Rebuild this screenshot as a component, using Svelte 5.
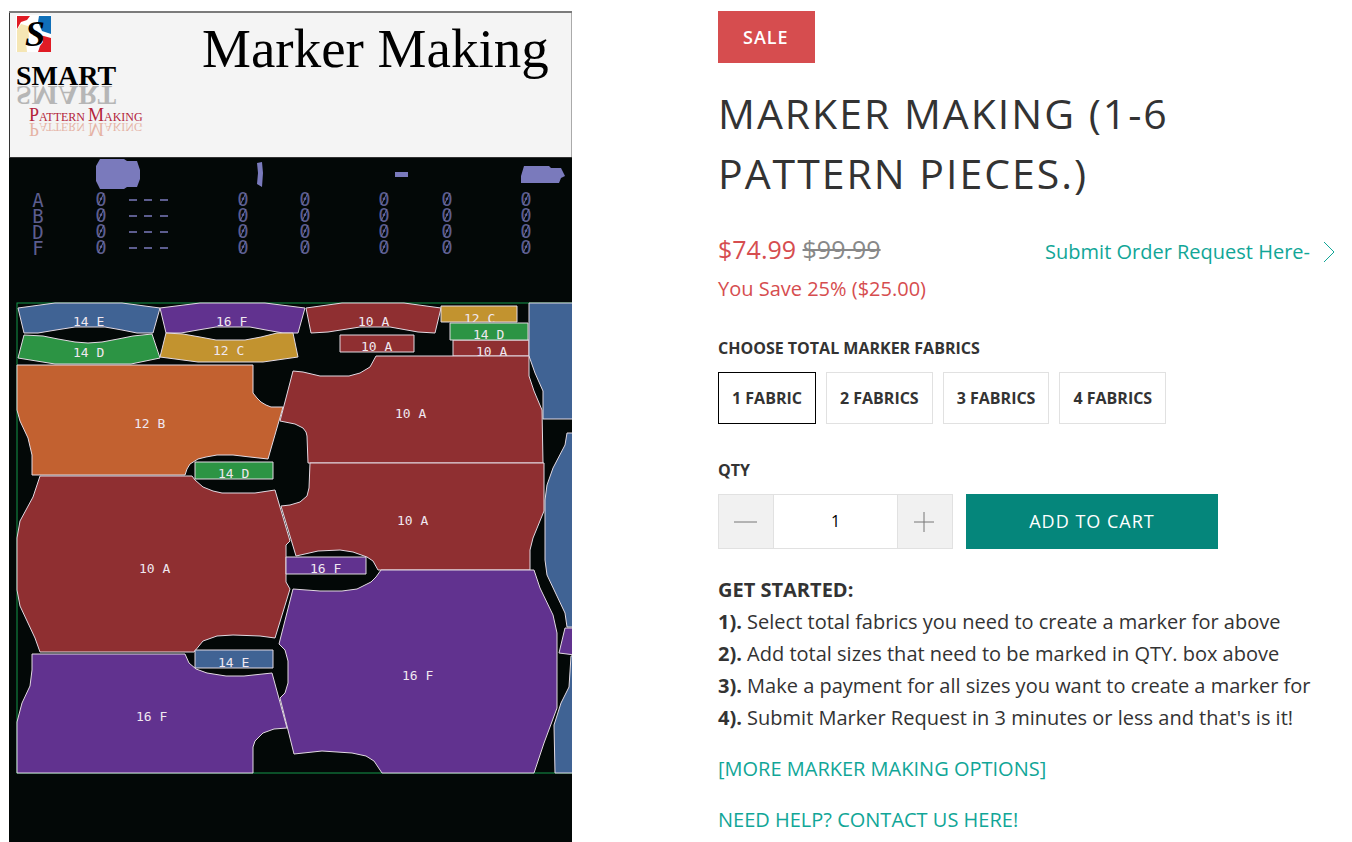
<script>
  const colors = {
    blue: '#406394',
    purple: '#61328f',
    red: '#8f2f31',
    green: '#2c9444',
    gold: '#c2932f',
    orange: '#c26130'
  };

  // Marker pieces: outline points, label and label baseline
  const pieces = [
    { color: 'blue', label: '14 E', x: 73, y: 326, points: '18,308 55,303 122,303 160,308 153,333 137,333 122,330 105,327 75,327 56,330 38,333 24,333' },
    { color: 'green', label: '14 D', x: 73, y: 357, points: '24,335 43,336 58,339 75,342 88,343 102,342 118,339 133,336 152,334 160,358 131,364 55,364 18,358' },
    { color: 'purple', label: '16 F', x: 216, y: 326, points: '160,308 200,303 265,303 305,308 298,333 283,333 266,330 250,327 216,327 198,330 181,333 166,333' },
    { color: 'gold', label: '12 C', x: 213, y: 355, points: '166,333 183,334 200,337 216,340 245,340 261,337 277,333 293,333 298,357 263,362 198,362 160,357' },
    { color: 'red', label: '10 A', x: 358, y: 326, points: '306,308 342,303 404,303 441,308 435,333 418,332 390,327 360,327 328,332 311,333' },
    { color: 'gold', label: '12 C', x: 464, y: 323, points: '441,306 517,306 517,322 441,322' },
    { color: 'red', label: '10 A', x: 476, y: 356, points: '453,340 529,340 529,356 453,356' },
    { color: 'green', label: '14 D', x: 473, y: 339, points: '450,323 528,323 528,340 450,340' },
    { color: 'red', label: '10 A', x: 361, y: 351, points: '340,335 414,335 414,352 340,352' },
    { color: 'blue', label: '', x: 0, y: 0, points: '529,303 575,303 575,419 543,419 543,391 535,373 529,356' },
    { color: 'blue', label: '', x: 0, y: 0, points: '575,433 567,433 565,445 553,468 547,485 545,500 545,560 547,575 565,613 567,627 575,627' },
    { color: 'purple', label: '', x: 0, y: 0, points: '575,628 565,628 559,653 575,655' },
    { color: 'blue', label: '', x: 0, y: 0, points: '575,655 571,656 569,687 561,703 554,725 555,773 575,773' },
    { color: 'orange', label: '12 B', x: 134, y: 428, points: '17,365 253,365 253,393 257,398 261,402 266,405 271,407 283,407 268,459 250,457 233,455 217,455 206,457 198,459 190,464 187,469 185,475 32,475 32,455 28,438 20,421 17,410' },
    { color: 'red', label: '10 A', x: 395, y: 418, points: '293,371 303,372 320,376 349,376 360,373 370,367 376,356 529,356 529,376 534,391 542,410 543,463 308,463 307,436 306,432 303,428 295,424 280,421' },
    { color: 'red', label: '10 A', x: 397, y: 525, points: '310,463 544,463 544,511 533,538 530,550 530,570 378,570 373,561 367,557 353,552 340,550 318,551 296,556 281,506 290,505 300,502 307,496 309,488' },
    { color: 'red', label: '10 A', x: 139, y: 573, points: '40,476 192,476 195,480 203,487 213,491 222,493 255,493 275,490 290,541 286,545 286,582 290,589 275,638 260,636 233,635 217,636 203,641 194,652 40,652 35,638 20,606 17,590 17,538 20,521 33,497' },
    { color: 'purple', label: '16 F', x: 402, y: 680, points: '293,589 320,591 342,591 357,589 371,582 376,577 381,570 534,570 540,588 553,615 557,633 557,708 544,743 534,773 382,773 374,761 366,756 352,753 322,751 294,754 280,698 285,693 288,683 288,661 285,650 279,644' },
    { color: 'purple', label: '16 F', x: 136, y: 721, points: '32,654 185,654 189,663 196,669 207,673 226,676 244,676 272,673 287,728 274,729 263,733 255,741 253,747 253,773 17,773 17,722 22,703 30,686 32,670' },
    { color: 'green', label: '14 D', x: 218, y: 478, points: '195,462 273,462 273,479 195,479' },
    { color: 'purple', label: '16 F', x: 310, y: 573, points: '286,557 366,557 366,574 286,574' },
    { color: 'blue', label: '14 E', x: 218, y: 667, points: '195,650 273,650 273,668 195,668' }
  ];

  const sizeRows = ['A', 'B', 'D', 'F'];
  const countColumns = [101, 243, 305, 384, 447, 526];

  const fabrics = ['1 Fabric', '2 Fabrics', '3 Fabrics', '4 Fabrics'];

  const steps = [
    'Select total fabrics you need to create a marker for above',
    'Add total sizes that need to be marked in QTY. box above',
    'Make a payment for all sizes you want to create a marker for',
    "Submit Marker Request in 3 minutes or less and that's is it!"
  ];

  let fabric = $state('1 Fabric');
  let qty = $state(1);
</script>

<main class="product">
  <div class="gallery">
    <svg viewBox="9 11 563 831" role="img" aria-label="Marker Making">
      <defs>
        {#each pieces as piece, i}
          <clipPath id="piece-{i}"><polygon points={piece.points} /></clipPath>
        {/each}
      </defs>
      <rect x="9" y="11" width="563" height="831" fill="#030807" />

      <!-- Banner -->
      <rect x="9" y="11" width="563" height="147" fill="#333" />
      <rect x="10" y="11" width="562" height="146" fill="#aaa" />
      <rect x="10" y="13" width="561" height="144" fill="#f4f4f4" />
      <path d="M9 12H572" stroke="#7b7b7b" stroke-width="2" />
      <rect x="16" y="15" width="35" height="37" fill="#fff" />
      <path d="M17 16H30L27 20L21 22L17 29Z" fill="#e01b24" />
      <path d="M39 16H51V34L42 31L38 22Z" fill="#0f6fb8" />
      <path d="M17 30L21 24L28 26L29 37L26 42L27 52H17Z" fill="#f5e6b4" />
      <path d="M40 35L51 38V52H38L40 46L43 42Z" fill="#e01b24" />
      <text class="logo-letter" x="25" y="46">S</text>
      <text class="logo-name" x="16" y="85">SMART</text>
      <text class="logo-name mirrored" x="16" y="-86" transform="scale(1 -1)" aria-hidden="true">SMART</text>
      <text class="logo-sub" x="29" y="121"><tspan class="cap">P</tspan>ATTERN <tspan class="cap">M</tspan>AKING</text>
      <text class="logo-sub mirrored" x="29" y="-123" transform="scale(1 -1)" aria-hidden="true"><tspan class="cap">P</tspan>ATTERN <tspan class="cap">M</tspan>AKING</text>
      <text class="banner-title" x="202" y="67">Marker Making</text>

      <!-- Piece icons and counts -->
      <g fill="#7a7abc">
        <path d="M100 159H124L127 161H137L140 170V179L137 187H127L124 189H100L96 181V166Z" />
        <path d="M257 163L262 162L263 173L262 187L257 184L258 173Z" />
        <path d="M395 172H408V177H395Z" />
        <path d="M524 166H549L551 168H561L565 176L561 178L559 183H521V176Z" />
      </g>
      {#each sizeRows as row, i}
        <g class="counts">
          <text x="38" y={207 + i * 16}>{row}</text>
          {#each countColumns as cx}
            <text x={cx} y={206 + i * 16}>0</text>
            <path class="slash" d="M{cx - 3} {205 + i * 16}l6 -12" />
          {/each}
          <path d="M129 {200 + i * 16}h8m7 0h8m8 0h8" />
        </g>
      {/each}

      <!-- Marker layout -->
      <rect x="17" y="303" width="570" height="470" fill="none" stroke="#14964a" />
      {#each pieces as piece, i}
        <polygon class="piece" points={piece.points} fill={colors[piece.color]} />
        {#if piece.label}
          <g clip-path="url(#piece-{i})">
            <text class="piece-label" x={piece.x} y={piece.y}>{piece.label}</text>
          </g>
        {/if}
      {/each}
    </svg>
  </div>

  <div class="details">
    <span class="sale">Sale</span>
    <h1>Marker Making (1-6 Pattern Pieces.)</h1>

    <div class="price-row">
      <p class="price">$74.99 <s>$99.99</s></p>
      <a class="order-link" href="#order">
        Submit Order Request Here-
        <svg width="12" height="22" viewBox="0 0 12 22" fill="none" stroke="currentColor" aria-hidden="true"><path d="M1 1L11 11L1 21" /></svg>
      </a>
    </div>
    <p class="savings">You Save 25% ($25.00)</p>

    <fieldset>
      <legend>Choose total marker fabrics</legend>
      <div class="options">
        {#each fabrics as option}
          <label class="option" class:selected={fabric === option}>
            <input type="radio" name="fabric" value={option} bind:group={fabric} />
            {option}
          </label>
        {/each}
      </div>
    </fieldset>

    <label class="qty-label" for="qty">Qty</label>
    <div class="purchase">
      <div class="qty">
        <button type="button" aria-label="Decrease quantity" onclick={() => (qty = Math.max(1, Number(qty) - 1))}>
          <svg width="24" height="24" viewBox="0 0 24 24" aria-hidden="true"><path d="M0 12H23" /></svg>
        </button>
        <input id="qty" type="text" inputmode="numeric" bind:value={qty} />
        <button type="button" aria-label="Increase quantity" onclick={() => (qty = Number(qty) + 1)}>
          <svg width="24" height="24" viewBox="0 0 24 24" aria-hidden="true"><path d="M1 12H21M11 2V22" /></svg>
        </button>
      </div>
      <button type="button" class="add">Add to Cart</button>
    </div>

    <div class="description">
      <p>
        <strong>GET STARTED:</strong>
        {#each steps as step, i}
          <br /><strong>{i + 1}).</strong> {step}
        {/each}
      </p>
      <p><a href="#options">[MORE MARKER MAKING OPTIONS]</a></p>
      <p><a href="#contact">NEED HELP? CONTACT US HERE!</a></p>
    </div>
  </div>
</main>

<style>
  :global(body) { margin: 0; background: #fff; }

  .product {
    display: grid; grid-template-columns: 563fr 617fr; column-gap: 146px;
    padding: 11px 17px 0 9px;
    font-family: "Open Sans", sans-serif; font-size: 20px; line-height: 32px; color: #333;
  }
  .gallery svg { display: block; width: 100%; height: auto; }

  .banner-title { font: 55px "Liberation Serif", serif; }
  .logo-letter { font: italic bold 36px "Liberation Serif", serif; }
  .logo-name { font: bold 28px "Liberation Serif", serif; }
  .logo-sub { font: 12px "Liberation Serif", serif; fill: #b3243a; }
  .logo-sub .cap { font-size: 18px; }
  .mirrored { opacity: 0.25; }
  .logo-sub.mirrored { fill: #d0532f; opacity: 0.4; }
  .counts { fill: #7a7abc; stroke: none; opacity: 0.75; }
  .counts text { font: 19px "DejaVu Sans Mono", monospace; text-anchor: middle; }
  .counts path { stroke: #7a7abc; stroke-width: 2; }
  .counts .slash { stroke: #9090e0; stroke-width: 1; }
  .piece { stroke: #e2d9e2; }
  .piece-label { font: 13px "DejaVu Sans Mono", monospace; fill: #f0e8f0; }

  .sale {
    display: inline-block; padding: 10px 26px 10px 25px;
    background: #d64d4f; color: #fff;
    font-size: 18px; font-weight: 600; letter-spacing: 1px; text-transform: uppercase;
  }
  h1 {
    margin: 20px 0 30px;
    font-size: 41px; font-weight: 400; line-height: 60px; letter-spacing: 2px; text-transform: uppercase;
  }
  p { margin: 0; }

  .price-row { display: flex; justify-content: space-between; align-items: baseline; }
  .price { font-size: 25px; color: #d64d4f; }
  .price s { color: #888; }
  .order-link { display: flex; align-items: center; gap: 13px; }
  .savings { margin-top: 5px; color: #d64d4f; }
  a { color: #11a697; text-decoration: none; }

  fieldset { margin: 27px 0 0; padding: 0; border: 0; min-width: 0; }
  legend, .qty-label {
    display: block; padding: 0;
    font-size: 16px; font-weight: 700; text-transform: uppercase;
  }
  .options { display: flex; flex-wrap: wrap; gap: 10px; margin-top: 8px; }
  .option {
    padding: 9px 13px; border: 1px solid #e1e1e1;
    font-size: 16px; font-weight: 700; text-transform: uppercase; cursor: pointer;
  }
  .option.selected { border-color: #000; }
  .option input { position: absolute; opacity: 0; pointer-events: none; }
  .option:focus-within { outline: 2px solid #11a697; }

  .qty-label { margin-top: 30px; }
  .purchase { display: flex; flex-wrap: wrap; gap: 13px; margin-top: 8px; }
  .qty {
    display: flex; box-sizing: border-box; width: 235px; height: 55px;
    border: 1px solid #e1e1e1;
  }
  .qty button {
    display: flex; flex: 0 0 54px; align-items: center; justify-content: center;
    padding: 0; border: 0; background: #f1f1f1; cursor: pointer;
  }
  .qty svg { fill: none; stroke: #777; }
  .qty input {
    flex: 1; min-width: 0; padding: 0 0 2px;
    border: 0; border-left: 1px solid #e1e1e1; border-right: 1px solid #e1e1e1;
    font: 16px "Open Sans", sans-serif; text-align: center; color: #000;
  }
  .add {
    width: 252px; height: 55px; padding: 0 0 2px; border: 0;
    background: #05867b; color: #fff;
    font: 500 18px "Open Sans", sans-serif; letter-spacing: 1px; text-transform: uppercase; cursor: pointer;
  }

  .description { margin-top: 25px; }
  .description p + p { margin-top: 19px; }
</style>
